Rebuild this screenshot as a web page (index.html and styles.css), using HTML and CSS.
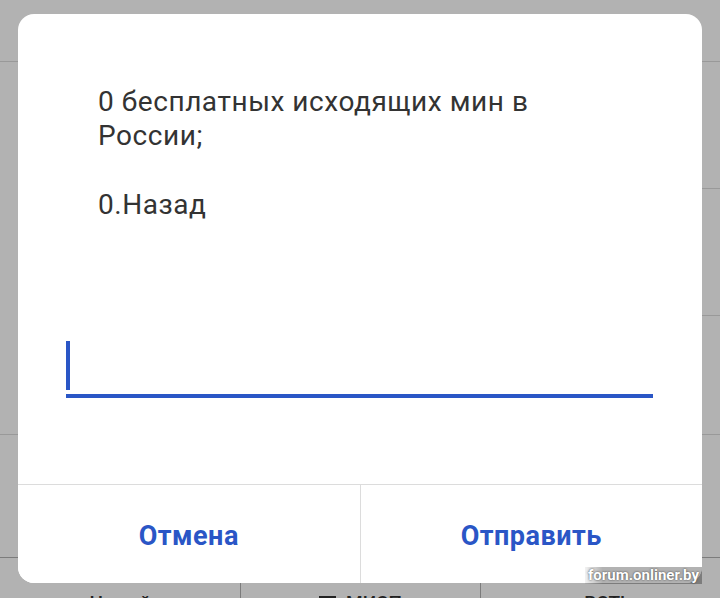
FILE: index.html
```html
<!DOCTYPE html>
<html>
<head>
  <title>USSD</title>
  <meta name="viewport" content="width=device-width, initial-scale=1.0">
  <link rel="stylesheet" href="styles.css">
</head>
<body>
  <div class="screen">
    <!-- list behind the dimmed overlay -->
    <div class="backdrop">
      <div class="bg-row row-top"></div>
      <div class="bg-row row-mid"></div>
      <div class="bg-row row-mid"></div>
      <div class="bg-row row-low"></div>
      <div class="bg-row row-last"></div>
      <div class="tabbar">
        <div class="tab"><span class="tab-text">Новый</span></div>
        <div class="tab"><span class="tab-text"><span class="sq"></span>МИСП</span></div>
        <div class="tab"><span class="tab-text">+ ВСТЬ</span></div>
      </div>
    </div>

    <div class="dialog">
      <div class="content">
        <p class="msg">0 бесплатных исходящих мин в<br>России;</p>
        <p class="msg gap">0.Назад</p>

        <div class="field">
          <span class="cursor"></span>
        </div>
      </div>
      <div class="actions">
        <button class="action">Отмена</button>
        <button class="action split">Отправить</button>
      </div>
    </div>

    <div class="watermark">forum.onliner.by</div>
  </div>
</body>
</html>
```

FILE: styles.css
```css
body {
  margin: 0;
  padding: 0;
  background-color: #b2b2b2;
  font-family: Roboto, "Noto Sans", Arial, sans-serif;
}

.screen {
  position: relative;
  width: 720px;
  height: 598px;
  overflow: hidden;
  background-color: #b2b2b2;
}

.backdrop {
  display: flex;
  flex-direction: column;
}

.bg-row {
  border-bottom: 1px solid #999;
}

.row-top {
  height: 61px;
}

.row-mid {
  height: 126px;
  margin-left: 80px;
}

.row-low {
  height: 118px;
}

.row-last {
  height: 122px;
  border-bottom-color: #7c7c7c;
}

.tabbar {
  display: flex;
  height: 40px;
}

.tab {
  flex: 1;
  border-left: 1px solid #7c7c7c;
  display: flex;
  justify-content: center;
  padding-top: 35px;
}

.tab:first-child {
  flex: 0 0 240px;
  border-left: none;
}

.tab-text {
  font-size: 19px;
  font-weight: 500;
  color: #222;
  line-height: 20px;
  display: flex;
  align-items: flex-start;
}

.sq {
  width: 17px;
  height: 17px;
  margin-top: 3px;
  background: #222;
  margin-right: 10px;
}

.dialog {
  position: absolute;
  top: 14px;
  left: 18px;
  width: 684px;
  height: 569px;
  background: #fff;
  border-radius: 16px;
  display: flex;
  flex-direction: column;
  overflow: hidden;
}

.content {
  height: 470px;
  box-sizing: border-box;
  padding: 71px 0 86px;
  display: flex;
  flex-direction: column;
}

.msg {
  margin: 0 80px;
  font-size: 28px;
  letter-spacing: 0.55px;
  line-height: 34.3px;
  color: #333;
}

.gap {
  margin-top: 34.3px;
}

.field {
  margin: auto 49px 0 48px;
  height: 63px;
  box-sizing: border-box;
  padding-top: 6px;
  border-bottom: 4px solid #2a56c6;
}

.cursor {
  display: block;
  width: 4px;
  height: 49px;
  background: #2a56c6;
}

.actions {
  display: flex;
  flex: 1;
  border-top: 1px solid #dcdcdc;
}

.action {
  flex: 1;
  border: none;
  background: #fff;
  font-family: Roboto, "Noto Sans", Arial, sans-serif;
  font-size: 27px;
  letter-spacing: 0.5px;
  font-weight: bold;
  color: #2a56c6;
  padding: 3px 0 0;
  margin: 0;
}

.split {
  border-left: 1px solid #dcdcdc;
}

.watermark {
  position: absolute;
  right: 18px;
  bottom: 14px;
  padding: 0 3px;
  font-size: 15px;
  line-height: 17px;
  font-weight: bold;
  color: #fff;
  background: linear-gradient(to right, rgba(0, 0, 0, 0.05), rgba(0, 0, 0, 0.3) 15%, rgba(0, 0, 0, 0.3));
  text-shadow: 0 0 2px #333;
}
```
